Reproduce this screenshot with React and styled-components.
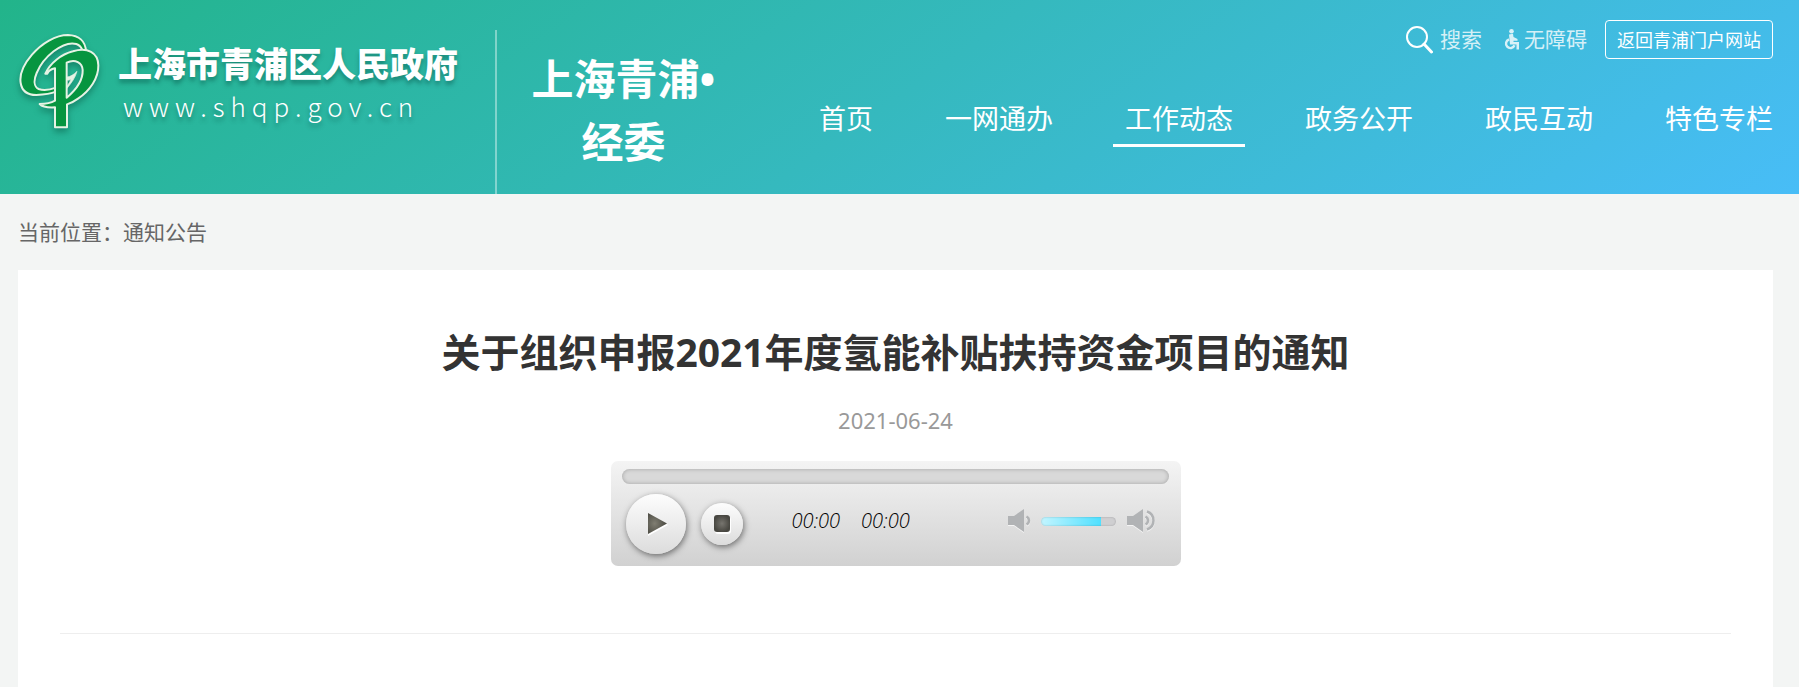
import React, { useState } from 'react';
import styled, { createGlobalStyle } from 'styled-components';

const GlobalStyle = createGlobalStyle`
  * { box-sizing: border-box; }
  html, body, #root { height: 100%; }
  body {
    margin: 0;
    background: #f3f5f4;
    font-family: "Noto Sans", "Noto Sans CJK SC", sans-serif;
    color: #333;
  }
  a { color: inherit; text-decoration: none; }
  button { border: 0; padding: 0; background: none; font: inherit; color: inherit; cursor: pointer; }
`;

const Page = styled.div`
  display: flex;
  flex-direction: column;
  min-height: 100%;
`;

const Header = styled.header`
  display: flex;
  justify-content: space-between;
  height: 194px;
  padding: 0 26px 0 18px;
  color: #fff;
  background: linear-gradient(145deg, #22b48a 0%, #35b9be 50%, #48bdf7 100%);
`;

const Brand = styled.div`
  display: flex;
`;

const LogoLink = styled.a`
  display: flex;
  align-items: flex-start;
  gap: 17px;
  width: 477px;
  padding-top: 33px;
`;

const Emblem = styled.svg`
  width: 83px;
  height: 97px;
  overflow: visible;
  filter: drop-shadow(0 4px 3px rgba(0, 70, 50, 0.4));
`;

const LogoText = styled.span`
  display: flex;
  flex-direction: column;
  padding-top: 9px;
  text-shadow: 0 4px 4px rgba(0, 70, 60, 0.4);
`;

const GovName = styled.span`
  font-family: "Noto Sans CJK SC", sans-serif;
  font-size: 34px;
  font-weight: 900;
  line-height: 42px;
`;

const GovUrl = styled.span`
  padding-left: 5px;
  font-family: "Noto Sans CJK SC", sans-serif;
  font-size: 26px;
  font-weight: 300;
  line-height: 44px;
  letter-spacing: 6px;
`;

const SiteName = styled.h1`
  width: 257px;
  margin: 30px 0 0;
  padding: 17px 36px 0 34px;
  border-left: 2px solid rgba(255, 255, 255, 0.4);
  font-size: 42px;
  font-weight: 700;
  line-height: 63px;
  text-align: center;
`;

const HeaderSide = styled.div`
  display: flex;
  flex-direction: column;
  align-items: flex-end;
  padding-top: 20px;
`;

const Tools = styled.div`
  display: flex;
  align-items: center;
`;

const ToolLink = styled.a`
  display: flex;
  align-items: center;
  gap: ${(p) => p.$gap}px;
  margin-right: ${(p) => p.$after}px;
  font-size: 21px;
  line-height: 39px;
  color: rgba(255, 255, 255, 0.8);
`;

const PortalLink = styled.a`
  height: 39px;
  padding: 0 11px;
  border: 1px solid #fff;
  border-radius: 4px;
  font-size: 18px;
  line-height: 39px;
`;

const Nav = styled.nav`
  display: flex;
  gap: 48px;
  margin: 36px -12px 0 0;
`;

const NavLink = styled.a`
  height: 52px;
  padding: 0 12px;
  border-bottom: 3px solid ${(p) => (p.$active ? '#fff' : 'transparent')};
  font-size: 27px;
  line-height: 48px;
`;

const Main = styled.main`
  display: flex;
  flex: 1;
  flex-direction: column;
  padding: 0 26px 0 18px;
`;

const Crumbs = styled.nav`
  height: 76px;
  font-size: 21px;
  line-height: 76px;
  color: #666;
`;

const Card = styled.article`
  display: flex;
  flex: 1;
  flex-direction: column;
  align-items: center;
  padding: 52px 42px 0;
  background: #fff;
`;

const Title = styled.h2`
  margin: 0;
  font-size: 39px;
  font-weight: 700;
  line-height: 60px;
`;

const PublishDate = styled.time`
  margin-top: 23px;
  font-size: 22px;
  line-height: 30px;
  color: #999;
`;

const Divider = styled.hr`
  width: 100%;
  margin: 67px 0 0;
  border: 0;
  border-top: 1px solid #eee;
`;

const Player = styled.section`
  width: 570px;
  height: 105px;
  margin-top: 26px;
  padding: 8px 12px 0 11px;
  border-radius: 7px;
  background: linear-gradient(#f4f4f4, #d1d1d1);
`;

const Slider = styled.input.attrs({ type: 'range' })`
  appearance: none;
  display: block;
  width: ${(p) => p.$width};
  height: ${(p) => p.$height}px;
  margin: 0;
  border-radius: 8px;
  background: ${(p) => p.$fill || 'none'} no-repeat ${(p) => (p.$fill ? '#cfcfd1' : '#d9d9d9')};
  background-size: ${(p) => p.value}% 100%;
  box-shadow: inset 0 0 ${(p) => (p.$fill ? 2 : 4)}px rgba(0, 0, 0, 0.25);
  cursor: pointer;
  &::-webkit-slider-thumb { appearance: none; width: 1px; height: 1px; opacity: 0; }
`;

const Controls = styled.div`
  display: flex;
  align-items: center;
  height: 80px;
  padding: 0 14px 0 4px;
`;

const RoundButton = styled.button`
  display: flex;
  align-items: center;
  justify-content: center;
  width: ${(p) => p.$size}px;
  height: ${(p) => p.$size}px;
  margin-right: 15px;
  border-radius: 50%;
  background: linear-gradient(#fdfdfd, #dcdcdc);
  box-shadow: 1px 2px 6px rgba(0, 0, 0, 0.5);
`;

const Times = styled.div`
  display: flex;
  flex: 1;
  gap: 21px;
  padding: 0 0 6px 34px;
  font-family: "Open Sans", "Noto Sans", sans-serif;
  font-size: 20px;
  font-style: italic;
  font-weight: 300;
  line-height: 24px;
  color: #000;
`;

const Volume = styled.div`
  display: flex;
  align-items: center;
  gap: 9px;
  padding-bottom: 6px;
`;

const IconButton = styled.button`
  display: flex;
  justify-content: flex-end;
  width: ${(p) => p.$width}px;
`;

function QingpuEmblem() {
  return (
    <Emblem viewBox="54 40 249 291" aria-hidden="true">
      <g fill="#069540" stroke="#e6f3e4" strokeWidth="6" strokeLinejoin="round" fillRule="evenodd">
        <path d="M258 96C257 64 236 47 204 46C167 46 125 71 96 105C71 134 58 165 62 190C66 216 83 226 109 226C132 225 153 222 168 216V204C149 211 129 213 116 208C101 201 101 181 110 160C120 136 139 112 161 95C182 79 208 67 229 73C239 76 245 84 249 96Z" />
        <path d="M136 162C150 131 183 104 219 95C263 82 294 99 295 137C296 175 270 213 234 237C222 246 211 251 201 254V323H165V263C147 264 127 262 119 253C137 253 153 250 165 243V146C154 148 145 155 142 162ZM200 129V234C230 209 249 180 248 151C247 130 226 116 200 129Z" />
        <path d="M201 206C214 190 226 174 231 155C220 166 211 171 201 172V181C207 182 210 181 213 179C210 187 206 193 201 199Z" fill="#e6f3e4" strokeWidth="2" />
      </g>
    </Emblem>
  );
}

function SearchIcon() {
  return (
    <svg width="27" height="28" viewBox="0 0 27 28" fill="none" stroke="#fff" aria-hidden="true">
      <circle cx="11" cy="11" r="10" strokeWidth="2" />
      <path d="M18 18L25.500 26" strokeWidth="3" strokeLinecap="round" />
    </svg>
  );
}

function WheelchairIcon() {
  return (
    <svg width="16" height="21" viewBox="0 0 16 21" fill="none" stroke="currentColor" aria-hidden="true">
      <circle cx="7.500" cy="2.300" r="2.300" fill="currentColor" stroke="none" />
      <path d="M5 5.500L9 4.800L9.500 8L13.500 10V11.800H9.500V13H15V20.500H12.500V15.500H6Z" fill="currentColor" stroke="none" />
      <path d="M5 10.500A4.400 4.400 0 1 0 10.500 16.300" strokeWidth="2.400" />
    </svg>
  );
}

function PlayIcon() {
  return (
    <svg width="26" height="24" viewBox="0 0 26 24" aria-hidden="true">
      <defs>
        <radialGradient id="play-face" cx="0.35" cy="0.5" r="0.6">
          <stop offset="0" stopColor="#807e72" />
          <stop offset="1" stopColor="#4c4b43" />
        </radialGradient>
      </defs>
      <path d="M5 3L25 13L5 24Z" fill="#fff" />
      <path d="M5 1L24 11.500L5 22Z" fill="url(#play-face)" />
    </svg>
  );
}

function StopIcon() {
  return (
    <svg width="18" height="20" viewBox="0 0 18 20" aria-hidden="true">
      <defs>
        <radialGradient id="stop-face">
          <stop offset="0" stopColor="#77756f" />
          <stop offset="1" stopColor="#484741" />
        </radialGradient>
      </defs>
      <rect x="2" y="3" width="16" height="17" rx="3" fill="#fff" />
      <rect x="1" y="1" width="16" height="17" rx="3" fill="url(#stop-face)" />
    </svg>
  );
}

function SpeakerIcon({ loud }) {
  const shape = (
    <>
      <path d="M0 7H6L16 0V23L6 16H0Z" fill="currentColor" stroke="none" />
      <path d="M18.500 7.500A4.500 4.500 0 0 1 18.500 15.500" />
      {loud && <path d="M20 2.500A9.500 9.500 0 0 1 20 20.500" />}
    </>
  );
  return (
    <svg width={loud ? 28 : 24} height="24" viewBox={`0 0 ${loud ? 28 : 24} 24`} fill="none" stroke="currentColor" strokeWidth="2.500" aria-hidden="true">
      <g color="#f4f4f4" transform="translate(0 1)">{shape}</g>
      <g color="#b1b3b5">{shape}</g>
    </svg>
  );
}

const NAV_ITEMS = ['首页', '一网通办', '工作动态', '政务公开', '政民互动', '特色专栏'];

function AudioPlayer() {
  const [position, setPosition] = useState(0);
  const [volume, setVolume] = useState(80);
  return (
    <Player aria-label="语音播报">
      <Slider
        aria-label="播放进度"
        $width="100%"
        $height={15}
        value={position}
        onChange={(e) => setPosition(Number(e.target.value))}
      />
      <Controls>
        <RoundButton $size={60} aria-label="播放"><PlayIcon /></RoundButton>
        <RoundButton $size={42} aria-label="停止"><StopIcon /></RoundButton>
        <Times>
          <span>00:00</span>
          <span>00:00</span>
        </Times>
        <Volume>
          <IconButton $width={24} aria-label="静音" onClick={() => setVolume(0)}><SpeakerIcon /></IconButton>
          <Slider
            aria-label="音量"
            $width="75px"
            $height={9}
            $fill="linear-gradient(90deg, #c3f5ff, #4fe0ff)"
            value={volume}
            onChange={(e) => setVolume(Number(e.target.value))}
          />
          <IconButton $width={30} aria-label="最大音量" onClick={() => setVolume(100)}><SpeakerIcon loud /></IconButton>
        </Volume>
      </Controls>
    </Player>
  );
}

export default function App() {
  return (
    <Page>
      <GlobalStyle />
      <Header>
        <Brand>
          <LogoLink href="#">
            <QingpuEmblem />
            <LogoText>
              <GovName>上海市青浦区人民政府</GovName>
              <GovUrl>www.shqp.gov.cn</GovUrl>
            </LogoText>
          </LogoLink>
          <SiteName>上海青浦•<wbr />经委</SiteName>
        </Brand>
        <HeaderSide>
          <Tools>
            <ToolLink href="#" $gap={7} $after={22}><SearchIcon />搜索</ToolLink>
            <ToolLink href="#" $gap={4} $after={18}><WheelchairIcon />无障碍</ToolLink>
            <PortalLink href="#">返回青浦门户网站</PortalLink>
          </Tools>
          <Nav>
            {NAV_ITEMS.map((item) => (
              <NavLink key={item} href="#" $active={item === '工作动态'}>{item}</NavLink>
            ))}
          </Nav>
        </HeaderSide>
      </Header>
      <Main>
        <Crumbs>当前位置：<a href="#">通知公告</a></Crumbs>
        <Card>
          <Title>关于组织申报2021年度氢能补贴扶持资金项目的通知</Title>
          <PublishDate dateTime="2021-06-24">2021-06-24</PublishDate>
          <AudioPlayer />
          <Divider />
        </Card>
      </Main>
    </Page>
  );
}
